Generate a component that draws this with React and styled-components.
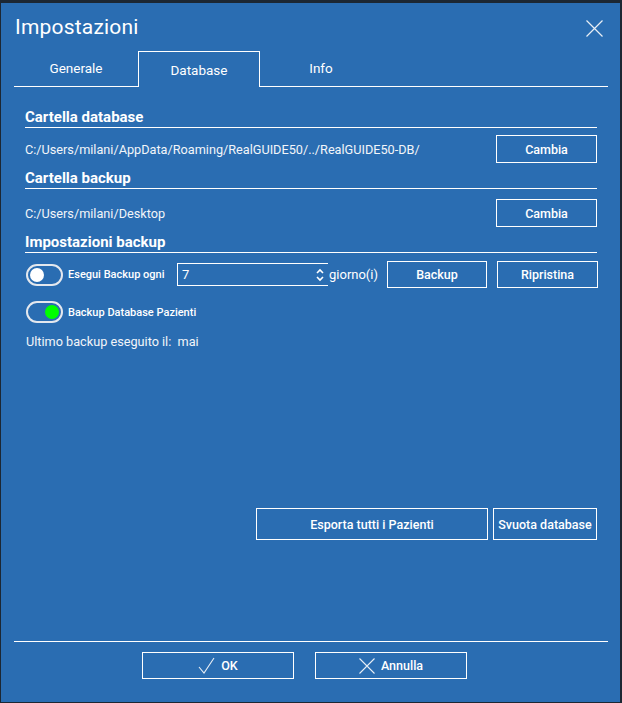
import React from 'react';
import styled, { createGlobalStyle } from "styled-components";

const GlobalStyle = createGlobalStyle`
  html, body {
    margin: 0;
    padding: 0;
    background: #1c2733;
    font-family: Roboto, "Liberation Sans", sans-serif;
    color: #fff;
  }
`;

const blue = '#2a6db2';

const Dialog = styled.div`
  width: 619px;
  height: 699px;
  margin: 3px 0 0 1px;
  background: ${blue};
  display: flex;
  flex-direction: column;
  padding: 0 12px 0 13px;
  box-sizing: border-box;
`;

const Header = styled.div`
  height: 48px;
  display: flex;
  align-items: center;
  justify-content: space-between;
`;

const Title = styled.div`
  font-size: 21px;
  padding-left: 1px;
  letter-spacing: 0.2px;
`;

const CloseButton = styled.div`
  width: 17px;
  height: 17px;
  margin-right: 5px;
  margin-top: 2px;
  display: flex;
`;

const TabBar = styled.div`
  height: 36px;
  display: flex;
  border-bottom: 1px solid #fff;
  box-sizing: border-box;
`;

const Tab = styled.div`
  width: ${p => p.$w}px;
  height: ${p => p.$active ? 36 : 35}px;
  box-sizing: border-box;
  display: flex;
  align-items: center;
  justify-content: center;
  font-size: 13.5px;
  padding-bottom: ${p => p.$active ? 0 : 2}px;
  border: 1px solid ${p => p.$active ? '#fff' : 'transparent'};
  border-bottom: none;
  background: ${p => p.$active ? blue : 'transparent'};
  margin-bottom: ${p => p.$active ? -1 : 0}px;
`;

const Content = styled.div`
  flex: 1;
  display: flex;
  flex-direction: column;
  padding: 0 11px;
`;

const SectionTitle = styled.div`
  font-size: 15px;
  font-weight: bold;
  line-height: 18px;
  padding-bottom: 1px;
  border-bottom: 1px solid #fff;
  margin-top: ${p => p.$mt}px;
`;

const Row = styled.div`
  display: flex;
  align-items: center;
  height: ${p => p.$h}px;
  margin-top: ${p => p.$mt}px;
`;

const PathText = styled.div`
  flex: 1;
  font-size: 12.7px;
  color: #f2f5f9;
`;

const Button = styled.button`
  flex-shrink: 0;
  width: ${p => p.$w}px;
  height: 100%;
  box-sizing: border-box;
  background: transparent;
  border: 1px solid #fff;
  color: #fff;
  font-family: Roboto, "Liberation Sans", sans-serif;
  font-weight: 500;
  font-size: 12.5px;
  padding: 0;
  margin-left: ${p => p.$ml || 0}px;
  display: flex;
  align-items: center;
  justify-content: center;
  gap: 6px;
`;

const Toggle = styled.div`
  flex-shrink: 0;
  width: 37px;
  height: 22px;
  box-sizing: border-box;
  border: 2px solid #e4e8ee;
  border-radius: 11px;
  margin-left: 1px;
  display: flex;
  align-items: center;
  justify-content: ${p => p.$on ? 'flex-end' : 'flex-start'};
  padding: 0 2px;
`;

const Knob = styled.div`
  width: 14px;
  height: 14px;
  border-radius: 50%;
  background: ${p => p.$on ? '#00ff00' : '#fff'};
`;

const ToggleLabel = styled.div`
  flex-shrink: 0;
  font-size: 11px;
  font-weight: 500;
  margin-left: 5px;
  width: ${p => p.$w ? p.$w + 'px' : 'auto'};
`;

const SpinBox = styled.div`
  flex-shrink: 0;
  width: 151px;
  height: 23px;
  box-sizing: border-box;
  border: 1px solid #fff;
  border-right: none;
  display: flex;
  align-items: center;
  justify-content: space-between;
  padding: 0 4px 0 4px;
  font-size: 13px;
`;

const Unit = styled.div`
  flex-shrink: 0;
  font-size: 13px;
  margin-left: 1px;
  width: 58px;
`;

const InfoText = styled.div`
  font-size: 12.7px;
  line-height: 16px;
  margin-top: 11px;
  margin-left: 1px;
  color: #f2f5f9;
`;

const ExportRow = styled.div`
  margin-top: auto;
  margin-bottom: 101px;
  height: 32px;
  display: flex;
  justify-content: flex-end;
`;

const Footer = styled.div`
  border-top: 1px solid #fff;
  padding: 10px 0 0 128px;
  height: 50px;
  display: flex;
`;

const FooterButtons = styled.div`
  height: 27px;
  display: flex;
  gap: 21px;
`;

const Spinner = () => (
  <svg width="8" height="14" viewBox="0 0 8 14">
    <path d="M1 5 L4 2 L7 5" fill="none" stroke="#fff" strokeWidth="1.6" />
    <path d="M1 9 L4 12 L7 9" fill="none" stroke="#fff" strokeWidth="1.6" />
  </svg>
);

export default function App() {
  return (
    <>
      <GlobalStyle />
      <Dialog>
        <Header>
          <Title>Impostazioni</Title>
          <CloseButton>
            <svg width="17" height="17" viewBox="0 0 17 17">
              <path d="M0.5 0.5 L16.5 16.5 M16.5 0.5 L0.5 16.5" stroke="#e8eef5" strokeWidth="1.2" />
            </svg>
          </CloseButton>
        </Header>
        <TabBar>
          <Tab $w={124}>Generale</Tab>
          <Tab $w={122} $active>Database</Tab>
          <Tab $w={122}>Info</Tab>
        </TabBar>
        <Content>
          <SectionTitle $mt={21}>Cartella database</SectionTitle>
          <Row $h={28} $mt={7}>
            <PathText>C:/Users/milani/AppData/Roaming/RealGUIDE50/../RealGUIDE50-DB/</PathText>
            <Button $w={101}>Cambia</Button>
          </Row>
          <SectionTitle $mt={6}>Cartella backup</SectionTitle>
          <Row $h={28} $mt={10}>
            <PathText>C:/Users/milani/Desktop</PathText>
            <Button $w={101}>Cambia</Button>
          </Row>
          <SectionTitle $mt={6}>Impostazioni backup</SectionTitle>
          <Row $h={27} $mt={8}>
            <Toggle><Knob /></Toggle>
            <ToggleLabel $w={109}>Esegui Backup ogni</ToggleLabel>
            <SpinBox>
              <span>7</span>
              <Spinner />
            </SpinBox>
            <Unit>giorno(i)</Unit>
            <Button $w={100}>Backup</Button>
            <Button $w={101} $ml={10}>Ripristina</Button>
          </Row>
          <Row $h={22} $mt={13}>
            <Toggle $on><Knob $on /></Toggle>
            <ToggleLabel>Backup Database Pazienti</ToggleLabel>
          </Row>
          <InfoText>Ultimo backup eseguito il:&nbsp;&nbsp;mai</InfoText>
          <ExportRow>
            <Button $w={232}>Esporta tutti i Pazienti</Button>
            <Button $w={104} $ml={5}>Svuota database</Button>
          </ExportRow>
        </Content>
        <Footer>
          <FooterButtons>
            <Button $w={152}>
              <svg width="17" height="17" viewBox="0 0 17 17">
                <path d="M1 10 L6 16 L16 1" fill="none" stroke="#e8eef5" strokeWidth="1.1" />
              </svg>
              OK
            </Button>
            <Button $w={152}>
              <svg width="16" height="16" viewBox="0 0 16 16">
                <path d="M0.5 0.5 L15.5 15.5 M15.5 0.5 L0.5 15.5" fill="none" stroke="#e8eef5" strokeWidth="1.1" />
              </svg>
              Annulla
            </Button>
          </FooterButtons>
        </Footer>
      </Dialog>
    </>
  );
}
